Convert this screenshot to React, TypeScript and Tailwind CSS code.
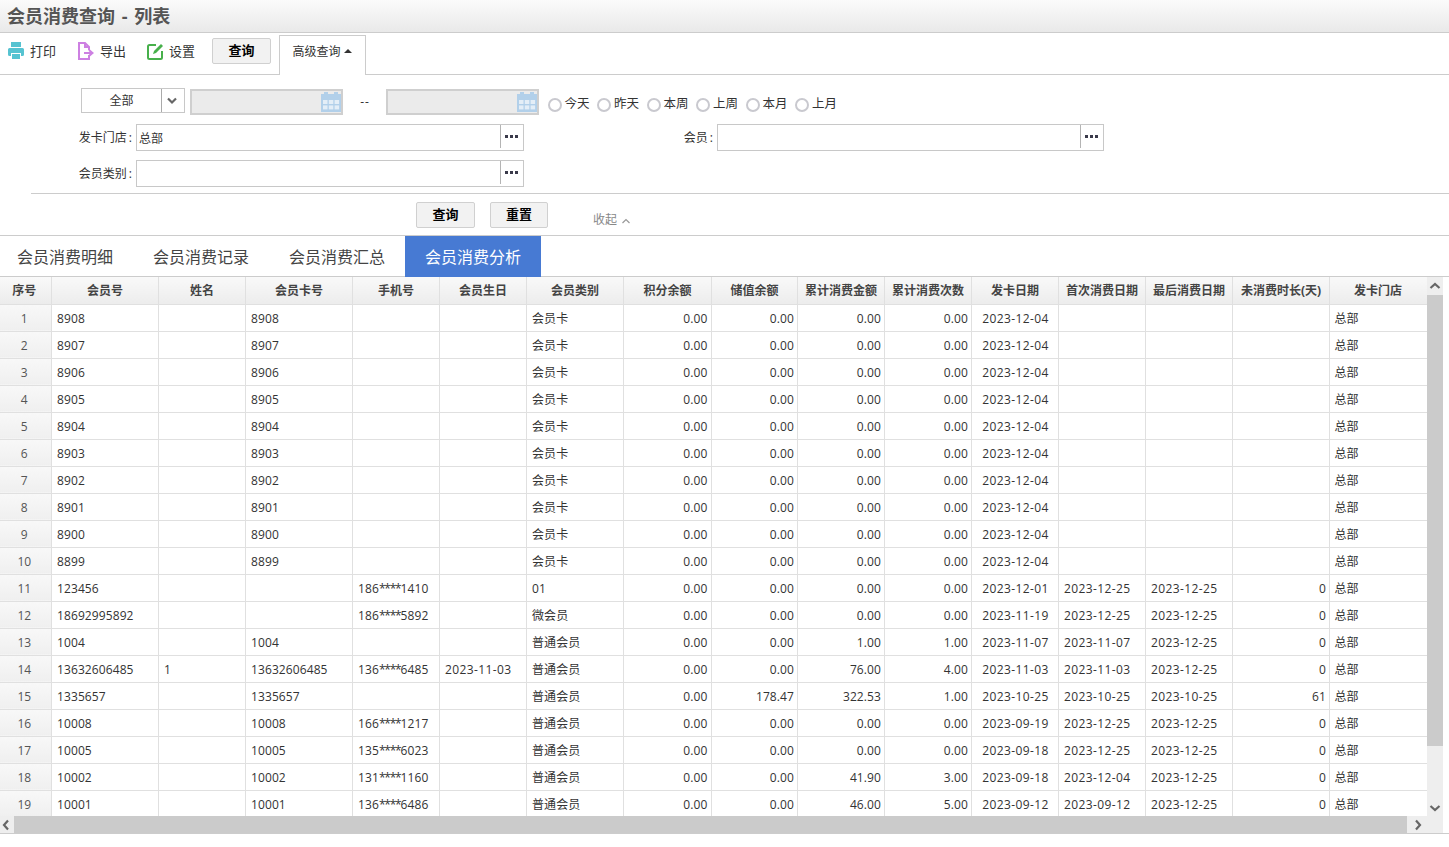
import React from "react";

const widths = [51, 107, 87, 107, 87, 87, 97, 88, 86, 87, 87, 87, 87, 87, 97, 98];
const heads = ["序号","会员号","姓名","会员卡号","手机号","会员生日","会员类别","积分余额","储值余额","累计消费金额","累计消费次数","发卡日期","首次消费日期","最后消费日期","未消费时长(天)","发卡门店"];

type Row = [string,string,string,string,string,string,string,string,string,string,string,string,string,string];
const mk = (n: string, d = "2023-12-04"): Row => [n,"",n,"","","会员卡","0.00","0.00","0.00","0.00",d,"","",""];
const rows: Row[] = [
  mk("8908"),mk("8907"),mk("8906"),mk("8905"),mk("8904"),mk("8903"),mk("8902"),mk("8901"),mk("8900"),mk("8899"),
  ["123456","","","186****1410","","01","0.00","0.00","0.00","0.00","2023-12-01","2023-12-25","2023-12-25","0"],
  ["18692995892","","","186****5892","","微会员","0.00","0.00","0.00","0.00","2023-11-19","2023-12-25","2023-12-25","0"],
  ["1004","","1004","","","普通会员","0.00","0.00","1.00","1.00","2023-11-07","2023-11-07","2023-12-25","0"],
  ["13632606485","1","13632606485","136****6485","2023-11-03","普通会员","0.00","0.00","76.00","4.00","2023-11-03","2023-11-03","2023-12-25","0"],
  ["1335657","","1335657","","","普通会员","0.00","178.47","322.53","1.00","2023-10-25","2023-10-25","2023-10-25","61"],
  ["10008","","10008","166****1217","","普通会员","0.00","0.00","0.00","0.00","2023-09-19","2023-12-25","2023-12-25","0"],
  ["10005","","10005","135****6023","","普通会员","0.00","0.00","0.00","0.00","2023-09-18","2023-12-25","2023-12-25","0"],
  ["10002","","10002","131****1160","","普通会员","0.00","0.00","41.90","3.00","2023-09-18","2023-12-04","2023-12-25","0"],
  ["10001","","10001","136****6486","","普通会员","0.00","0.00","46.00","5.00","2023-09-12","2023-09-12","2023-12-25","0"],
];
const rightCols = new Set([6,7,8,9,13]);

function Cell({ c }: { c: string }) {
  if (c.includes("****")) {
    const [a, b] = c.split("****");
    return <>{a}<span className="tracking-[-1.2px]">****</span>{b}</>;
  }
  if (/^\d{4}-\d{2}-\d{2}$/.test(c)) return <span className="tracking-[0.4px]">{c}</span>;
  return <>{c}</>;
}

function Calendar() {
  return (
    <svg width="20" height="20" viewBox="0 0 20 20" className="shrink-0">
      <rect x="0" y="2" width="20" height="18" fill="#b2d0ea" />
      <rect x="3" y="0" width="4" height="4" fill="#b2d0ea" />
      <rect x="13" y="0" width="4" height="4" fill="#b2d0ea" />
      <g fill="#e4eef7">
        <rect x="2" y="8" width="4.500" height="4" /><rect x="7.800" y="8" width="4.500" height="4" /><rect x="13.600" y="8" width="4.500" height="4" />
        <rect x="2" y="13.400" width="4.500" height="4" /><rect x="7.800" y="13.400" width="4.500" height="4" /><rect x="13.600" y="13.400" width="4.500" height="4" />
      </g>
    </svg>
  );
}

function DateBox() {
  return (
    <div className="w-[153px] h-[26px] border-2 border-[#cfcfcf] bg-[#ebebeb] flex items-center justify-end">
      <Calendar />
    </div>
  );
}

function Radio({ label }: { label: string }) {
  return (
    <div className="w-[49.5px] flex items-start shrink-0">
      <span className="w-[14px] h-[14px] rounded-full border-2 border-[#c9c9cf] bg-white shrink-0 mt-[10px]" />
      <span className="ml-[3px] mt-[7px] text-[12.5px] text-[#333] whitespace-nowrap">{label}</span>
    </div>
  );
}

function Picker({ w, value }: { w: string; value?: string }) {
  return (
    <div className={`${w} h-[27px] border border-[#c8c8c8] bg-white flex items-center`}>
      <span className="flex-1 pl-[2px] pt-[2px] text-[12px] text-[#333]">{value}</span>
      <span className="w-[23px] h-[23px] border-l border-[#b4b4b4] flex items-center justify-center gap-[2px] self-start pr-[1px]">
        <i className="w-[3px] h-[3px] bg-[#3a3a4a]" /><i className="w-[3px] h-[3px] bg-[#3a3a4a]" /><i className="w-[3px] h-[3px] bg-[#3a3a4a]" />
      </span>
    </div>
  );
}

function Btn({ w, label }: { w: string; label: string }) {
  return (
    <div className={`${w} h-[26px] border border-[#d0d0d0] rounded-[2px] bg-[#f2f2f2] flex items-center justify-center text-[13px] font-bold text-black`}>{label}</div>
  );
}

function Chevron({ d }: { d: string }) {
  return (
    <svg width="12" height="12" viewBox="0 0 12 12" fill="none" stroke="#666" strokeWidth="2.2">
      <path d={d} />
    </svg>
  );
}

export default function App() {
  return (
    <div className="w-[1449px] h-[847px] overflow-hidden bg-white font-['Open_Sans','Noto_Sans_CJK_SC',sans-serif] text-[12px] text-[#333]">
      <div className="h-[33px] border-b border-[#ccc] bg-gradient-to-b from-[#fbfbfb] to-[#e9e9e9] flex items-center pl-[7px] pt-[1px] text-[18px] font-bold text-[#555] [word-spacing:2px]">
        会员消费查询 - 列表
      </div>

      <div className="h-[42px] border-b border-[#ccc] flex items-start">
        <div className="flex items-center h-[36px] pl-[8px] w-[78px] shrink-0">
          <svg width="16" height="18" viewBox="0 0 16 18" fill="#56c3d1">
            <path d="M3 0h10v5H3z" />
            <path d="M1.500 6h13a1.500 1.500 0 0 1 1.500 1.500v5a1.500 1.500 0 0 1-1.500 1.500H13v-3H3v3H1.500A1.500 1.500 0 0 1 0 12.500v-5A1.500 1.500 0 0 1 1.500 6z" />
            <path d="M4 12h8v5H4z" />
          </svg>
          <span className="ml-[6px] pt-[2px] text-[13px]">打印</span>
        </div>
        <div className="flex items-center h-[36px] w-[69px] shrink-0">
          <svg width="16" height="18" viewBox="0 0 16 18" fill="none" stroke="#cd80e2" strokeWidth="2">
            <path d="M11 13v4H1V1h6l4 4v3" />
            <path d="M7 1v4h4" />
            <path d="M6 11h8M11 8l3.500 3-3.500 3" />
          </svg>
          <span className="ml-[6px] pt-[2px] text-[13px]">导出</span>
        </div>
        <div className="flex items-center h-[36px] w-[65px] shrink-0">
          <svg width="17" height="17" viewBox="0 0 17 17" fill="none" stroke="#47b04b" strokeWidth="2">
            <path d="M9 2H2.500Q1 2 1 3.500V14.500Q1 16 2.500 16H13.500Q15 16 15 14.500V8" />
            <path d="M6 11l1-3 7-7 2 2-7 7z" fill="#47b04b" stroke="none" />
          </svg>
          <span className="ml-[5px] pt-[2px] text-[13px]">设置</span>
        </div>
        <div className="mt-[5px]"><Btn w="w-[59px]" label="查询" /></div>
        <div className="ml-[8px] mt-[2px] w-[87px] h-[40px] border-x border-t border-[#ccc] bg-white flex items-start justify-center pt-[7px] pr-[1px] text-[12px] text-[#333]">
          高级查询<span className="ml-[3px] mt-[6px] w-0 h-0 border-x-[4px] border-x-transparent border-b-[4px] border-b-[#333]" />
        </div>
      </div>

      <div className="h-[118px] pt-[13px]">
        <div className="flex items-start pl-[81px] h-[27px]">
          <div className="w-[104px] h-[25px] border border-[#c8c8c8] flex items-center">
            <span className="flex-1 text-center text-[12px] pt-[1px]">全部</span>
            <span className="w-[23px] h-full border-l border-[#aaa] flex items-center justify-center pr-[2px]">
              <Chevron d="M2 3.500l4 4 4-4" />
            </span>
          </div>
          <div className="ml-[5px] mt-[1px]"><DateBox /></div>
          <span className="w-[43px] pl-[1px] mt-[5px] text-center text-[12px] tracking-[1px]">--</span>
          <div className="mt-[1px]"><DateBox /></div>
          <div className="flex ml-[8.6px]">
            {["今天","昨天","本周","上周","本月","上月"].map((t) => <Radio key={t} label={t} />)}
          </div>
        </div>
        <div className="flex items-center mt-[9px]">
          <span className="w-[133px] text-right pr-[1px]">发卡门店<span className="ml-[2px]">:</span></span>
          <div className="ml-[3px]"><Picker w="w-[388px]" value="总部" /></div>
          <span className="w-[189px] text-right">会员<span className="ml-[2px]">:</span></span>
          <div className="ml-[4px]"><Picker w="w-[387px]" /></div>
        </div>
        <div className="flex items-center mt-[9px]">
          <span className="w-[133px] text-right pr-[1px]">会员类别<span className="ml-[2px]">:</span></span>
          <div className="ml-[3px]"><Picker w="w-[388px]" /></div>
        </div>
      </div>

      <div className="ml-[31px] h-[42px] border-t border-[#ccc] pt-[8px] flex items-start pl-[385px]">
        <Btn w="w-[59px]" label="查询" />
        <div className="ml-[15px]"><Btn w="w-[58px]" label="重置" /></div>
        <span className="ml-[45px] mt-[9px] text-[12px] text-[#888] flex items-center">
          收起
          <svg width="10" height="10" viewBox="0 0 10 10" fill="none" stroke="#999" strokeWidth="1.200" className="ml-[4px] mt-[2px]"><path d="M1.500 7l3.500-3.500L8.500 7" /></svg>
        </span>
      </div>

      <div className="border-t border-[#ccc] h-[42px] border-b flex text-[16px] text-[#444]">
        <div className="w-[133px] pl-[17px] pt-[1px] flex items-center">会员消费明细</div>
        <div className="w-[136px] pt-[1px] flex items-center justify-center">会员消费记录</div>
        <div className="w-[136px] pt-[1px] flex items-center justify-center">会员消费汇总</div>
        <div className="w-[136px] -mb-px bg-[#477ad3] text-white flex items-center justify-center">会员消费分析</div>
      </div>

      <div className="flex h-[539px]">
        <div className="w-[1427px] h-full overflow-hidden">
          <table className="table-fixed border-collapse w-[1427px]">
            <colgroup>
              {widths.map((w, i) => <col key={i} style={{ width: w }} />)}
            </colgroup>
            <thead>
              <tr className="h-[27px]">
                {heads.map((h, i) => (
                  <th key={i} className={`p-0 pt-[2px] border-r border-b border-[#e0e0e0] bg-gradient-to-b from-[#f9f9f9] to-[#ececec] text-center font-bold text-[12px] text-[#444] whitespace-nowrap ${i === 0 ? "pr-[2px]" : i === 15 ? "" : "pl-[1px]"}`}>{h}</th>
                ))}
              </tr>
            </thead>
            <tbody>
              {rows.map((r, i) => (
                <tr key={i} className="h-[27px]">
                  <td className="p-0 pt-[2px] pr-[2px] border-r border-b border-[#e0e0e0] bg-gradient-to-b from-[#f8f8f8] to-[#efefef] text-center text-[#555]">{i + 1}</td>
                  {r.map((c, j) => (
                    <td key={j} className={`pb-0 pt-[2px] pl-[5.5px] border-r border-b border-[#e0e0e0] text-[#333] whitespace-nowrap overflow-hidden tracking-[0.1px] ${rightCols.has(j) ? (j === 6 ? "text-right pr-[3px]" : "text-right pr-[2.5px]") : j === 10 ? "text-center pr-[3.5px]" : "text-left pr-[5px]"}`}><Cell c={c} /></td>
                  ))}
                  <td className="pb-0 pt-[2px] px-[5px] border-r border-b border-[#e0e0e0] text-[#333]">总部</td>
                </tr>
              ))}
            </tbody>
          </table>
        </div>
        <div className="w-[16px] h-full bg-[#eeeeee] flex flex-col items-center">
          <div className="h-[18px] w-full flex items-center justify-center"><Chevron d="M1.500 8l4.500-4 4.500 4" /></div>
          <div className="h-[451px] w-full bg-[#cbcbcb]" />
          <div className="flex-1 w-full flex items-end justify-center pb-[2px]"><Chevron d="M1.500 4l4.500 4 4.500-4" /></div>
        </div>
      </div>

      <div className="h-[18px] border-b border-[#ccc] flex">
        <div className="w-[1443px] h-[17px] bg-[#eeeeee] flex">
          <div className="w-[14px] flex items-center justify-start"><Chevron d="M8 1.500L4 6l4 4.500" /></div>
          <div className="w-[1393px] bg-[#cbcbcb]" />
          <div className="flex-1 flex items-center pl-[5px]"><Chevron d="M4 1.500L8 6l-4 4.500" /></div>
        </div>
      </div>
    </div>
  );
}
